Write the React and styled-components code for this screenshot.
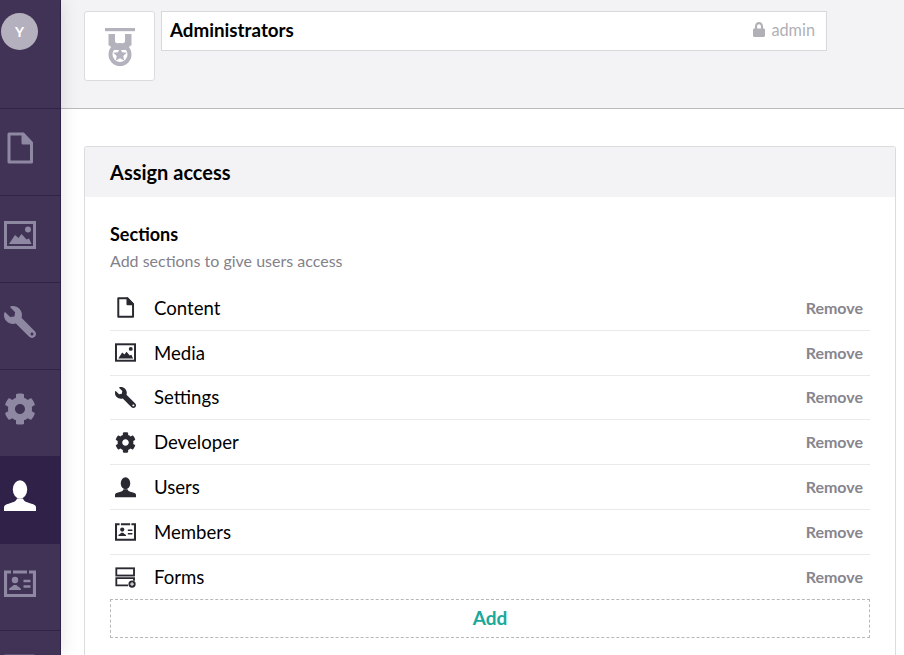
import React from 'react';
import styled, { createGlobalStyle } from 'styled-components';
import { FaCog, FaLock, FaWrench } from 'react-icons/fa';

const GlobalStyle = createGlobalStyle`
  html, body { margin: 0; padding: 0; height: 100%; overflow: hidden; background: #fff; }
  body { font-family: Lato, "Open Sans", sans-serif; color: #000; }
`;

// --- Icons ---
const DocIcon = () => (
  <svg viewBox="0 0 32 32" fill="none" stroke="currentColor" strokeWidth="3" strokeLinejoin="round">
    <path d="M5 2h14l8.500 9v19H5z" />
    <path d="M19 2l8.500 9H19z" fill="currentColor" />
  </svg>
);
const ImageIcon = () => (
  <svg viewBox="0 0 32 32" fill="none">
    <rect x="1.500" y="3.500" width="29" height="25" stroke="currentColor" strokeWidth="3" />
    <circle cx="24" cy="10.500" r="3" fill="currentColor" />
    <path d="M5 25l6-9 3.500 3 3-4 5 5.500 2.500-1 2.500 5.500z" fill="currentColor" />
  </svg>
);
const WrenchIcon = () => <FlippedWrench />;
const CogIcon = () => <FaCog />;
const UserIcon = () => (
  <svg viewBox="0 0 32 32" fill="currentColor">
    <ellipse cx="16" cy="9.500" rx="7.200" ry="9.200" />
    <path d="M0 31v-3.500c0-2.500 2-3 6-4.300s6-1.700 7-4.700h6c1 3 3 3.400 7 4.700s6 1.800 6 4.300V31z" />
  </svg>
);
const CardIcon = () => (
  <svg viewBox="0 0 32 32" fill="none">
    <path d="M7 5H1.500v23.500h29V5H25M9 5h14" stroke="currentColor" strokeWidth="3.200" />
    <circle cx="11" cy="13" r="3.200" fill="currentColor" />
    <path d="M5 23c0-3 3.500-3 4.500-5h3c1 2 4.500 2 4.500 5z" fill="currentColor" />
    <path d="M19.500 14h7M19.500 19.500h7" stroke="currentColor" strokeWidth="2.400" />
  </svg>
);
const FormsIcon = () => (
  <svg viewBox="0 0 32 32" fill="none" stroke="currentColor" strokeWidth="2.800">
    <rect x="2" y="2" width="27" height="11" />
    <path d="M20 28H2V17h27v4" />
    <circle cx="26" cy="26" r="5.500" fill="currentColor" stroke="none" />
    <path d="M26 23v6M23 26h6" stroke="#fff" strokeWidth="1.500" />
  </svg>
);
const MedalIcon = () => (
  <svg viewBox="0 0 30 38" width="30" height="38" fill="#b4b2bc">
    <rect x="0" y="0" width="30" height="3.200" />
    <path d="M3.500 6h6.500v8l5 3.500 5-3.500V6h6.500v11l-6.500 5h-10l-6.500-5z" />
    <path fillRule="evenodd" d="M15 15a11.500 11.500 0 1 1 0 23 11.500 11.500 0 0 1 0-23zm0 4a7.500 7.500 0 1 0 0 15 7.500 7.500 0 0 0 0-15z" />
    <path d="M15 19.800l2 4.400 4.700.5-3.500 3.200 1 4.700-4.200-2.400-4.200 2.400 1-4.700-3.500-3.200 4.700-.5z" />
  </svg>
);

// --- Styled ---
const Page = styled.div`
  display: flex; width: 904px; height: 655px; overflow: hidden;
`;
const Sidebar = styled.nav`
  flex: 0 0 61px; box-sizing: border-box; height: 655px; overflow: hidden;
  background: #413356; border-right: 1px solid #2f2347;
  box-shadow: 0 0 18px rgba(0, 0, 0, 0.12); position: relative; z-index: 1;
`;
const AvatarSlot = styled.div`
  height: 109px; box-sizing: border-box; padding: 13px 0 0 1px;
  border-bottom: 1px solid #2f2347;
`;
const Avatar = styled.div`
  width: 37px; height: 37px; border-radius: 50%; background: #b5b0bd; color: #fff;
  display: flex; align-items: center; justify-content: center;
  font-size: 14px; font-weight: 700;
`;
const NavItem = styled.div`
  height: 87px; box-sizing: border-box; padding: 0 0 9px 4px;
  display: flex; align-items: center;
  background: ${p => (p.$active ? '#2f2148' : 'transparent')};
  color: ${p => (p.$active ? '#fff' : '#8f88a3')};
  border-bottom: 1px solid ${p => (p.$active ? '#2f2148' : '#2f2347')};
  svg { width: 32px; height: 32px; display: block; }
`;
const Main = styled.main`
  flex: 1; min-width: 0;
`;
const TopBar = styled.header`
  height: 109px; box-sizing: border-box; background: #f3f3f5; border-bottom: 1px solid #bbbbbb;
  padding: 11px 0 0 23px; display: flex; align-items: flex-start; gap: 6px;
`;
const IconBox = styled.div`
  width: 71px; height: 70px; box-sizing: border-box; background: #fff;
  border: 1px solid #dcdcdf; border-radius: 3px;
  display: flex; align-items: center; justify-content: center; padding-top: 1px;
`;
const NameBox = styled.div`
  width: 666px; height: 40px; box-sizing: border-box; background: #fff;
  border: 1px solid #d8d8db; padding: 0 11px 3px 8px;
  display: flex; align-items: center; justify-content: space-between;
`;
const GroupName = styled.span`
  font-size: 18.8px; font-weight: 700; color: #000;
`;
const Alias = styled.span`
  display: flex; align-items: center; gap: 6px; font-size: 16.3px; color: #b0b0b6;
  svg { width: 12px; height: 15px; }
`;
const Card = styled.section`
  margin: 37px 8px 0 23px; border: 1px solid #dcdcdf; border-bottom: 0;
  border-radius: 3px 3px 0 0; height: 600px;
`;
const CardHeader = styled.div`
  height: 50px; background: #f3f3f5; padding: 0 0 1px 25px; box-sizing: border-box;
  display: flex; align-items: center;
  font-size: 20px; font-weight: 700; color: #000;
`;
const CardBody = styled.div`
  padding: 25px 25px 0;
`;
const SectionTitle = styled.div`
  font-size: 18px; font-weight: 700; line-height: 24px; color: #000;
`;
const SectionHint = styled.div`
  font-size: 16px; line-height: 20px; margin-top: 5px; color: #83818a;
`;
const SectionList = styled.div`
  margin: 15px 0 -1px;
`;
const Row = styled.div`
  height: 44.8px; box-sizing: border-box; display: flex; align-items: center;
  border-bottom: ${p => (p.$last ? '0' : '1px solid #e9e9eb')};
`;
const RowIcon = styled.span`
  width: 44px; flex: none; padding-left: 5px; box-sizing: border-box; color: #2a2830;
  display: flex; align-items: center;
  svg { width: 21px; height: 21px; display: block; }
`;
const RowLabel = styled.span`
  flex: 1; font-size: 18.6px; color: #000;
`;
const RemoveLink = styled.span`
  font-size: 16px; font-weight: 700; color: #87858d; padding: 0 7px 1px 0;
`;
const AddButton = styled.div`
  height: 39px; box-sizing: border-box; border: 1px dashed #b8b8bc; padding-bottom: 2px;
  display: flex; align-items: center; justify-content: center;
  font-size: 19px; font-weight: 700; color: #1aa99b;
`;
const FlippedWrench = styled(FaWrench)`
  transform: scaleX(-1);
`;

const navItems = [
  { id: 'content', Icon: DocIcon },
  { id: 'media', Icon: ImageIcon },
  { id: 'settings', Icon: WrenchIcon },
  { id: 'developer', Icon: CogIcon },
  { id: 'users', Icon: UserIcon, active: true },
  { id: 'members', Icon: CardIcon },
  { id: 'forms', Icon: FormsIcon },
];

const sections = [
  { label: 'Content', Icon: DocIcon },
  { label: 'Media', Icon: ImageIcon },
  { label: 'Settings', Icon: WrenchIcon },
  { label: 'Developer', Icon: CogIcon },
  { label: 'Users', Icon: UserIcon },
  { label: 'Members', Icon: CardIcon },
  { label: 'Forms', Icon: FormsIcon },
];

export default function App() {
  return (
    <Page>
      <GlobalStyle />
      <Sidebar>
        <AvatarSlot><Avatar>Y</Avatar></AvatarSlot>
        {navItems.map(({ id, Icon, active }) => (
          <NavItem key={id} $active={active}><Icon /></NavItem>
        ))}
      </Sidebar>
      <Main>
        <TopBar>
          <IconBox><MedalIcon /></IconBox>
          <NameBox>
            <GroupName>Administrators</GroupName>
            <Alias><FaLock preserveAspectRatio="none" />admin</Alias>
          </NameBox>
        </TopBar>
        <Card>
          <CardHeader>Assign access</CardHeader>
          <CardBody>
            <SectionTitle>Sections</SectionTitle>
            <SectionHint>Add sections to give users access</SectionHint>
            <SectionList>
              {sections.map(({ label, Icon }, i) => (
                <Row key={label} $last={i === sections.length - 1}>
                  <RowIcon><Icon /></RowIcon>
                  <RowLabel>{label}</RowLabel>
                  <RemoveLink>Remove</RemoveLink>
                </Row>
              ))}
            </SectionList>
            <AddButton>Add</AddButton>
          </CardBody>
        </Card>
      </Main>
    </Page>
  );
}
